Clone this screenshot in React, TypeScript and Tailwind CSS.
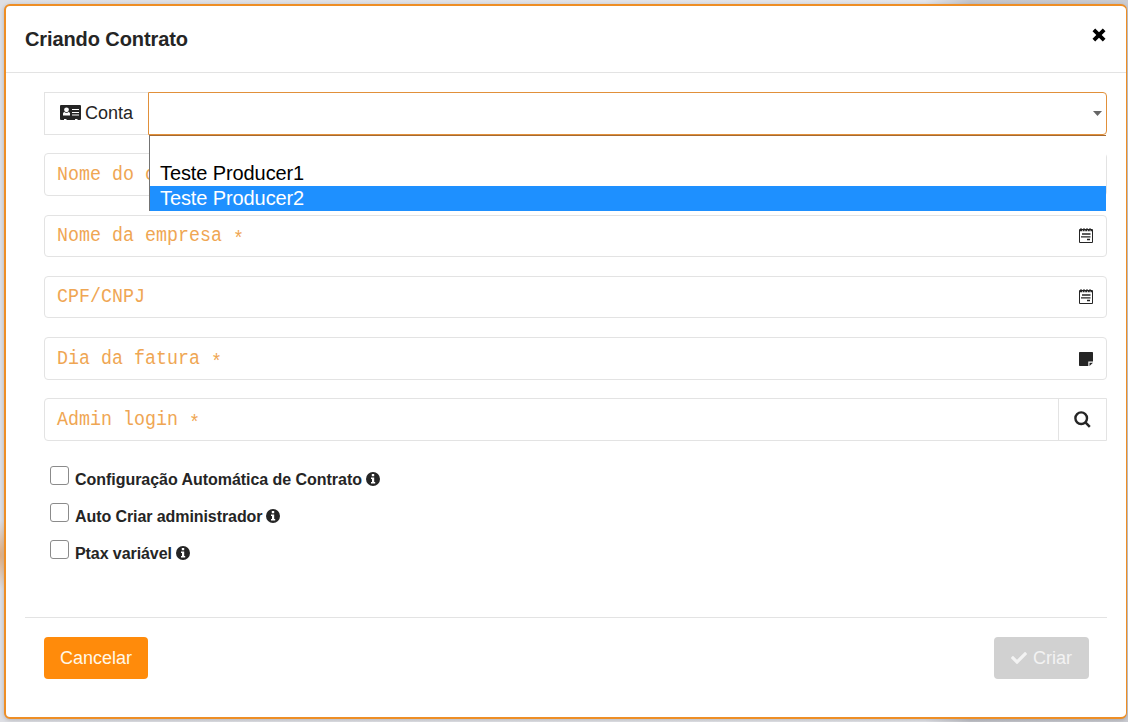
import { FaCheck } from "react-icons/fa";

function CloseIcon() {
  return (
    <svg className="h-[14px] w-[14px]" viewBox="0 0 14 14">
      <path d="M3.2 0.5 7 4.3 10.8 0.5 13.5 3.2 9.7 7 13.5 10.8 10.8 13.5 7 9.7 3.2 13.5 0.5 10.8 4.3 7 0.5 3.2Z" />
    </svg>
  );
}

function CardIcon() {
  return (
    <svg className="h-[15px] w-[21px]" viewBox="0 0 21 15">
      <path
        d="M1 0H20Q21 0 21 1V14Q21 15 20 15H17.5V14H15V15H6.5V14H4V15H1Q0 15 0 14V1Q0 0 1 0Z"
        fill="#252525"
      />
      <circle cx="6.5" cy="4.8" r="2.4" fill="#fff" />
      <path d="M3 10.5V8.6Q3 7.1 4.6 7Q6.5 8.8 8.4 7Q10 7.1 10 8.6V10.5Z" fill="#fff" />
      <path d="M12 4.5H19M12 7.5H19M12 10H19" stroke="#fff" strokeWidth="1.1" />
    </svg>
  );
}

function InfoIcon() {
  return (
    <svg className="ml-1 mt-[6px] h-[14px] w-[14px]" viewBox="0 0 14 14">
      <circle cx="7" cy="7" r="7" fill="#252525" />
      <path d="M5.8 2H8.2V4.2H5.8ZM5 5.4H8.2V10H9.2V11.6H5V10H6V7H5Z" fill="#fff" />
    </svg>
  );
}

function SearchIcon() {
  return (
    <svg className="h-[17px] w-[17px]" viewBox="0 0 17 17" fill="none" stroke="#252525">
      <circle cx="7.2" cy="7.2" r="5.8" strokeWidth="2.4" />
      <path d="M11.4 11.4 15.8 15.8" strokeWidth="2.5" />
    </svg>
  );
}

function NoteIcon() {
  return (
    <svg className="h-[14px] w-[14px]" viewBox="0 0 14 14" fill="#252525">
      <path d="M.7 0H13.3Q14 0 14 .7V9.5H9.3V14H.7Q0 14 0 13.3V.7Q0 0 .7 0ZM10.5 10.7H14L10.5 14Z" />
    </svg>
  );
}

function NotepadIcon() {
  return (
    <svg className="mb-0.5 h-[15px] w-[14px]" viewBox="0 0 14 15" fill="none" stroke="#252525">
      <path d="M.5 1.5H13.5V14.5H.5Z" />
      <path d="M1 2.5H13" strokeWidth="1.6" strokeDasharray="2 .6" />
      <path d="M1 1H13" strokeDasharray="2 1" />
      <path d="M3 6H11.5M2 8.8H11.5M8 11.5H11" strokeWidth="1.3" />
    </svg>
  );
}

function Placeholder({ text, required }: { text: string; required?: boolean }) {
  return (
    <span className="block translate-y-px scale-y-110 whitespace-pre font-['Liberation_Mono',monospace] text-[18.33px] leading-6 text-[#efa653]">
      {text}
      {required && <span className="relative top-[3px]"> *</span>}
    </span>
  );
}

function Field({ label, required, icon, className }: { label: string; required?: boolean; icon?: React.ReactNode; className: string }) {
  return (
    <div className={`flex shrink-0 items-center justify-between rounded border border-[#e3e3e3] pl-3 pr-[13px] ${className}`}>
      <Placeholder text={label} required={required} />
      {icon}
    </div>
  );
}

function CheckRow({ label, tracking }: { label: string; tracking: string }) {
  return (
    <label className="flex h-[37px] items-start">
      <span className="h-[19px] w-[19px] rounded-[3px] border border-[#8b8b8b] bg-white" />
      <span className={`ml-1.5 mt-1 text-base font-bold leading-5 ${tracking}`}>{label}</span>
      <InfoIcon />
    </label>
  );
}

export default function App() {
  return (
    <div className="h-[722px] w-[1128px] overflow-hidden bg-[#dcdde1] bg-[radial-gradient(ellipse_12px_35px_at_0px_555px,#e2ad7c,transparent),linear-gradient(90deg,#dedfe4_0%,#e4e5ea_82%,#c4c5cb_86%,#cbccd2_100%)] pl-1 pt-1 font-['Liberation_Sans',sans-serif] text-[#252525]">
      <div className="relative flex h-[715px] w-[1123px] flex-col rounded-md border-2 border-r border-[#ee8e25] bg-white shadow-[0_1px_4px_rgba(0,0,0,0.2)]">
        <header className="flex h-[67px] shrink-0 items-start justify-between border-b border-[#e3e3e3] pl-[19px] pr-5">
          <h1 className="mt-[21px] text-xl font-bold leading-6 tracking-[-0.1px]">Criando Contrato</h1>
          <button className="mt-[22px]"><CloseIcon /></button>
        </header>
        <main className="flex grow flex-col pl-[38px] pr-[19px] pt-[19px]">
          <div className="relative flex h-[43px] shrink-0">
            <div className="flex w-[104px] items-center gap-1 border border-r-0 border-[#e3e3e3] pb-[2px] pl-[15px] text-lg">
              <CardIcon />
              <span>Conta</span>
            </div>
            <div className="flex grow items-center justify-end rounded-r border border-[#e1903a] pr-1">
              <svg className="h-[5px] w-[9px]" viewBox="0 0 9 5"><path d="M0 0H9L4.5 5Z" fill="#666" /></svg>
            </div>
            <div className="absolute left-[105px] right-px top-[43px] z-10 h-[76px] border-l border-t border-l-[#737373] border-t-[#a56a32] bg-white pt-[25px] text-xl leading-[25px] tracking-[-0.1px]">
              <div className="h-[25px] pl-2.5 text-black">Teste Producer1</div>
              <div className="h-[25px] bg-[#1e90ff] pl-2.5 text-white">Teste Producer2</div>
            </div>
          </div>
          <Field label="Nome do c" className="mt-[18px] h-[43px]" />
          <Field label="Nome da empresa" required icon={<NotepadIcon />} className="mt-[19px] h-[42px]" />
          <Field label="CPF/CNPJ" icon={<NotepadIcon />} className="mt-[19px] h-[42px]" />
          <Field label="Dia da fatura" required icon={<NoteIcon />} className="mt-[19px] h-[43px]" />
          <div className="mt-[18px] flex h-[43px] shrink-0 items-center rounded-l border border-[#e3e3e3] pl-3">
            <div className="grow"><Placeholder text="Admin login" required /></div>
            <div className="flex h-full w-[48px] items-center justify-center border-l border-[#e3e3e3]">
              <SearchIcon />
            </div>
          </div>
          <div className="mt-[25px] pl-1.5">
            <CheckRow label="Configuração Automática de Contrato" tracking="tracking-[-0.04px]" />
            <CheckRow label="Auto Criar administrador" tracking="tracking-[-0.08px]" />
            <CheckRow label="Ptax variável" tracking="tracking-[-0.08px]" />
          </div>
        </main>
        <footer className="mx-[19px] flex h-[100px] shrink-0 items-start justify-between border-t border-[#e3e3e3] pl-[19px] pr-[18px] pt-[19px]">
          <button className="h-[42px] w-[104px] rounded bg-[#ff8b0b] text-lg text-[#fff8e8]">Cancelar</button>
          <button className="flex h-[42px] w-[95px] items-center justify-center gap-1.5 rounded bg-[#d1d1d1] text-lg text-[#f3f3f3]">
            <FaCheck className="h-4 w-4" />
            Criar
          </button>
        </footer>
      </div>
    </div>
  );
}
